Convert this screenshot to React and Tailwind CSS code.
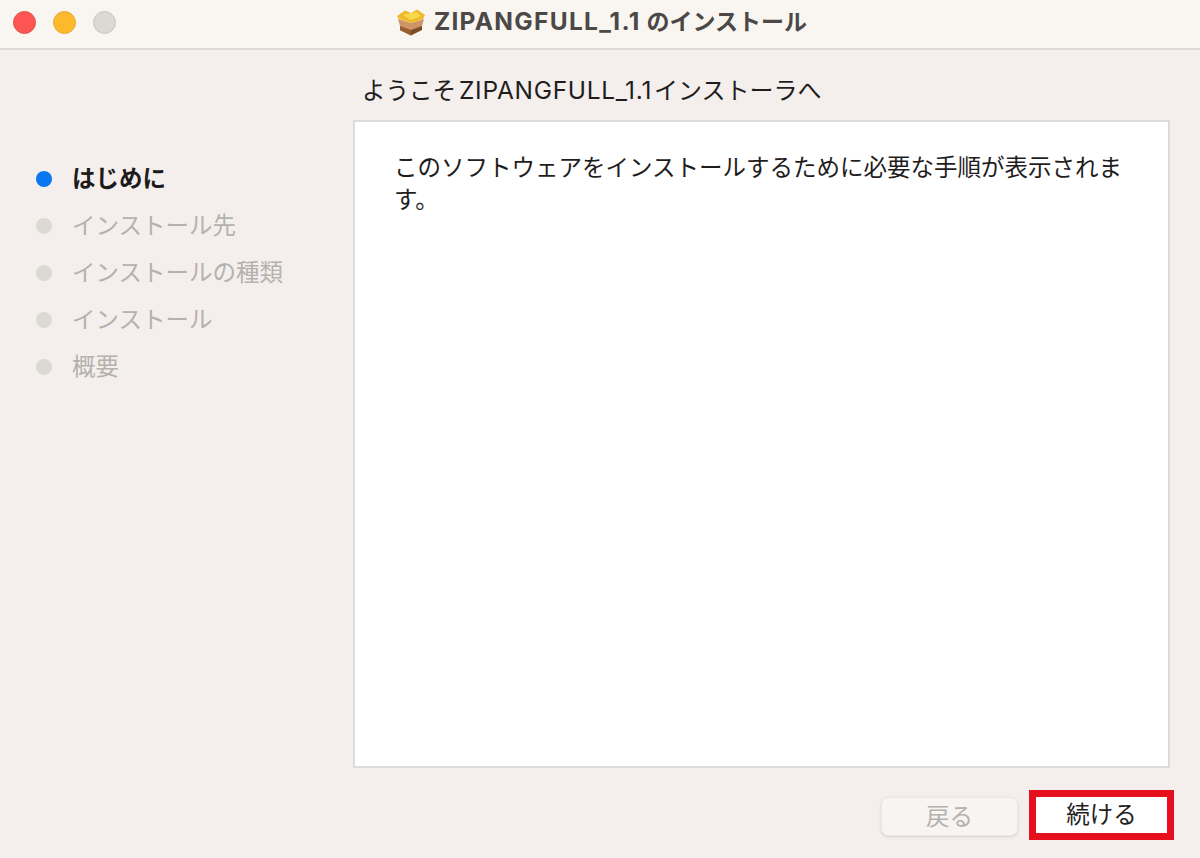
const FONT = "font-['Inter','Noto_Sans_CJK_JP',sans-serif]";

const STEPS = [
  { label: "はじめに", active: true },
  { label: "インストール先" },
  { label: "インストールの種類" },
  { label: "インストール" },
  { label: "概要" },
];

const PackageIcon = () => (
  <svg width="30" height="28" viewBox="0 0 30 28">
    {/* box body */}
    <path d="M4 13 L15 17 L26 13 L26 22 L15 27.5 L4 22 Z" fill="#7d4e26" />
    <path d="M4 13 L15 17 L15 27.5 L4 22 Z" fill="#96602f" />
    {/* tan band under the flaps */}
    <path d="M2 11 L15 15 L28 11 L26 18 L15 22 L4 18 Z" fill="#cf9468" />
    {/* yellow flaps */}
    <path d="M1 8 L9 2.5 L15 5 L21 1.5 L29 7 L27 11 L15 15 L3 11 Z" fill="#eeb92c" />
    <path d="M7 7 L13 5.5 L20 4 L25 8 L15 12 Z" fill="#f8d94c" />
  </svg>
);

const StepRow = ({ label, active }) => (
  <div className="flex items-center h-[47px]">
    <span className={`w-[16px] h-[16px] rounded-full shrink-0 ${active ? "bg-[#0a76f0]" : "bg-[#dcd9d5]"}`} />
    <span className={`ml-[20px] text-[23.5px] ${active ? "font-bold text-[#1c1a1a]" : "text-[#b5b1ae]"}`}>
      {label}
    </span>
  </div>
);

export default function App() {
  return (
    <div className={`${FONT} w-[1200px] h-[858px] bg-[#f4efec] flex flex-col overflow-hidden`}>
      {/* Title bar */}
      <div className="relative h-[50px] shrink-0 bg-[#f9f5f0] border-b-2 border-[#dedad7] flex items-center justify-center">
        <div className="absolute left-[13px] top-[11px] flex gap-[17px]">
          <span className="w-[23px] h-[23px] rounded-full bg-[#fd5652] border border-[#e0504c]" />
          <span className="w-[23px] h-[23px] rounded-full bg-[#fdb92c] border border-[#e6aa3a]" />
          <span className="w-[23px] h-[23px] rounded-full bg-[#dcd9d4] border border-[#c9c6c1]" />
        </div>
        <div className="flex items-center gap-[8px] pb-[5px] ml-[3px]">
          <PackageIcon />
          <span className="text-[23px] font-bold text-[#4b4846]">
            <span className="text-[24.5px] tracking-[1.3px] mr-[6px]">ZIPANGFULL_1.1</span>のインストール
          </span>
        </div>
      </div>

      <div className="flex flex-1">
        {/* Steps */}
        <div className="w-[353px] shrink-0 pl-[36px] pt-[105px]">
          {STEPS.map((s) => (
            <StepRow key={s.label} label={s.label} active={s.active} />
          ))}
        </div>

        {/* Main */}
        <div className="w-[817px] flex flex-col">
          <div className="h-[70px] shrink-0 pl-[9px] pt-[23px] text-[23.5px] leading-[34px] text-[#1f1d1d]">
            ようこそ
            <span className="text-[24.5px] tracking-[0.7px] ml-[3px] mr-[2px]">ZIPANGFULL_1.1</span>
            <span className="text-[24px]">インストーラへ</span>
          </div>
          <div className="h-[648px] bg-white border-2 border-[#dfdbd8] pl-[39px] pr-[40px] pt-[30px] text-[23.5px] leading-[32px] text-[#1f1d1d]">
            このソフトウェアをインストールするために必要な手順が表示されます。
          </div>
          <div className="flex justify-end mt-[22px] -mr-[4px] gap-[11px]">
            <button className="mt-[7px] w-[137px] h-[39px] rounded-[7px] bg-[#f8f4f1] border border-[#ebe7e4] shadow-sm text-[23.5px] text-[#b5b1ae]">
              戻る
            </button>
            <button className="w-[145px] h-[50px] bg-white border-[7px] border-[#e60f1e] text-[23.5px] text-[#1f1d1d]">
              続ける
            </button>
          </div>
        </div>
      </div>
    </div>
  );
}
